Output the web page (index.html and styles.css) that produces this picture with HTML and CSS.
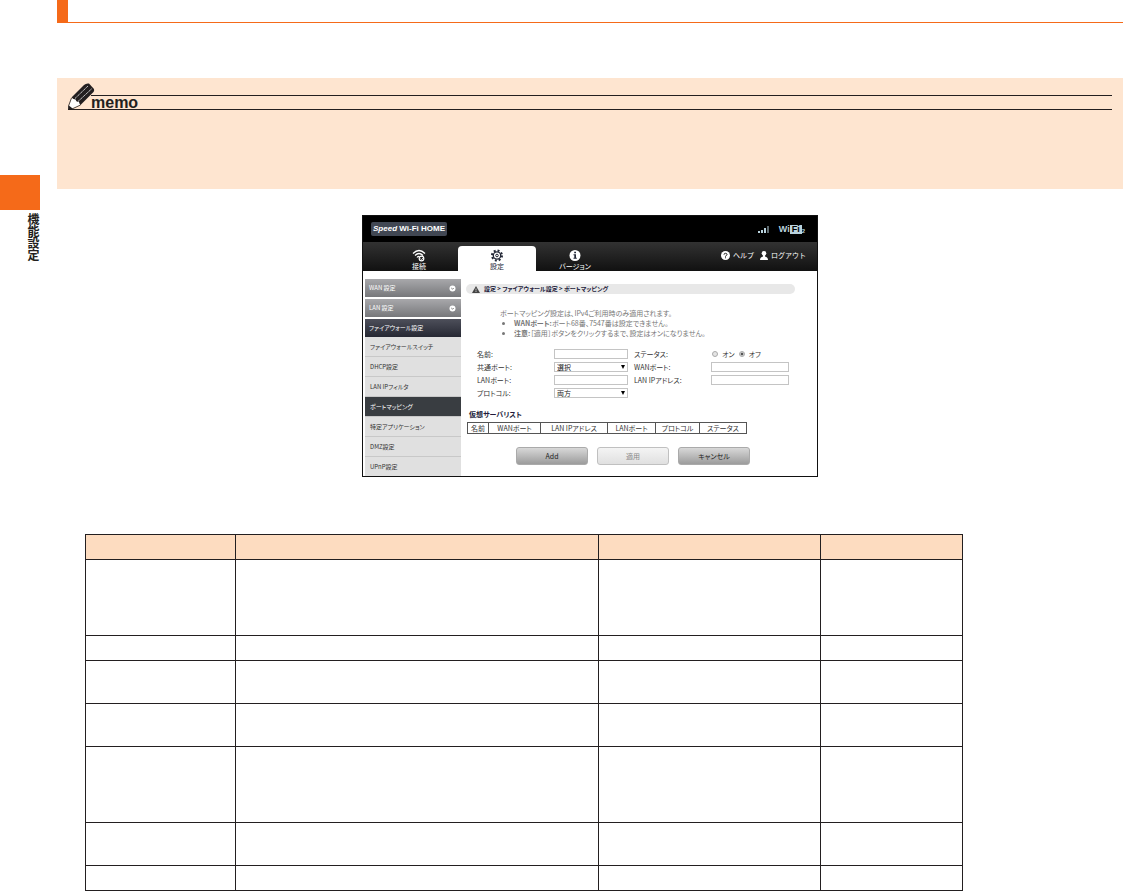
FILE: index.html
```html
<!DOCTYPE html>
<html lang="ja">
<head>
    <meta charset="UTF-8">
    <meta name="viewport" content="width=device-width, initial-scale=1.0">
    <title>機能設定 - ポートマッピング</title>
    <link rel="stylesheet" href="styles.css">
</head>
<body>
    <aside class="chapter">
        <div class="chapter-tab"></div>
        <div class="chapter-name">機能設定</div>
    </aside>

    <main class="page">
        <div class="page-title"></div>

        <section class="memo">
            <div class="memo-head">
                <svg class="pencil" viewBox="0 0 27 27">
                    <path d="M3.500 14.500 L16 2 Q18 0 21 0.500 L26 6 Q26.500 8 25.500 9 L12.500 22 Z" fill="#231f20"/>
                    <path d="M7 15.500 L20 3 M10 18.500 L24 5.500" stroke="#fff" stroke-width="0.8" stroke-dasharray="1.600 0.500"/>
                    <path d="M3.500 15.500 L7.500 16.500 L8.500 18.500 L11 19 L12 22 L3.500 25.500 L1 23.500 Z" fill="#fff"/>
                    <path d="M3.500 15 L0.500 23 L0.500 26 L4 26 L12.500 22" fill="none" stroke="#231f20" stroke-width="0.8"/>
                    <path d="M0.800 22.500 L0.500 26.500 L5 25.700 Z" fill="#231f20"/>
                </svg>
                <h2>memo</h2>
            </div>
        </section>

        <!-- Router settings screen -->
        <div class="screen">
            <div class="brand-bar">
                <span class="brand"><em>Speed</em> Wi-Fi HOME</span>
                <div class="signals">
                    <svg width="12" height="8" viewBox="0 0 12 8" fill="#b9d3de">
                        <path d="M0 6h2v2H0zM3 5h2v3H3zM6 3h2v5H6z"/>
                        <path d="M9.500 1h1v7h-1z"/>
                    </svg>
                    <span class="wifi-logo">Wi<b>Fi</b><small>2</small></span>
                </div>
            </div>

            <nav class="tabs">
                <a href="#">
                    <svg width="14" height="13" viewBox="0 0 14 13" fill="none" stroke="#fff" stroke-width="1.2">
                        <path d="M1 4.500Q7 -1.500 13 4.500M3 6.500Q7 2.500 11 6.500M5 8.500Q6 7.200 7.500 7.500"/>
                        <circle cx="9.500" cy="9.500" r="2.300"/>
                        <path d="M8.500 9.500l1 1 2-2" stroke-width="0.8"/>
                    </svg>
                    接続
                </a>
                <a href="#" class="active">
                    <svg width="14" height="13" viewBox="0 0 14 13" fill="none" stroke="#222736">
                        <circle cx="7" cy="6.500" r="5" stroke-width="2" stroke-dasharray="1.960 1.960"/>
                        <circle cx="7" cy="6.500" r="3.700" stroke-width="1.300"/>
                        <circle cx="7" cy="6.500" r="1.300"/>
                    </svg>
                    設定
                </a>
                <a href="#">
                    <svg width="14" height="13" viewBox="0 0 14 13">
                        <circle cx="7" cy="6.500" r="5.500" fill="#fff"/>
                        <path d="M6.200 2.800h1.800v1.500H6.200zM5.500 5.300h2.500v3.500h.8v1H5.500v-1h.8V6.300h-.8z" fill="#222736"/>
                    </svg>
                    バージョン
                </a>
                <div class="account">
                    <a href="#">
                        <svg width="9" height="9" viewBox="0 0 9 9">
                            <circle cx="4.500" cy="4.500" r="4.500" fill="#fff"/>
                            <path d="M3 3.700Q3 2.300 4.500 2.300T6 3.600Q6 4.300 4.500 5V5.600M4.500 6.300v1" fill="none" stroke="#222"/>
                        </svg>
                        ヘルプ
                    </a>
                    <a href="#">
                        <svg width="8" height="9" viewBox="0 0 8 9" fill="#fff">
                            <circle cx="4" cy="2.300" r="2.300"/>
                            <path d="M3 4h2v1.500Q8 6 8 9H0Q0 6 3 5.500z"/>
                        </svg>
                        ログアウト
                    </a>
                </div>
            </nav>

            <div class="screen-body">
                <nav class="menu">
                    <a href="#" class="group">WAN 設定
                        <svg width="7" height="7" viewBox="0 0 7 7"><circle cx="3.500" cy="3.500" r="3" fill="#fff"/><path d="M2.300 3l1.200 1.200L4.700 3" fill="none" stroke="#777"/></svg>
                    </a>
                    <a href="#" class="group">LAN 設定
                        <svg width="7" height="7" viewBox="0 0 7 7"><circle cx="3.500" cy="3.500" r="3" fill="#fff"/><path d="M2.300 3l1.200 1.200L4.700 3" fill="none" stroke="#777"/></svg>
                    </a>
                    <a href="#" class="group open">ファイアウォール設定</a>
                    <a href="#">ファイアウォールスイッチ</a>
                    <a href="#">DHCP設定</a>
                    <a href="#">LAN IPフィルタ</a>
                    <a href="#" class="current">ポートマッピング</a>
                    <a href="#">特定アプリケーション</a>
                    <a href="#">DMZ設定</a>
                    <a href="#">UPnP設定</a>
                </nav>

                <form class="content">
                    <div class="breadcrumb">
                        <svg width="8" height="7" viewBox="0 0 8 7"><path d="M4 0l4 7H0z" fill="#444"/><path d="M4 2.500v2M4 5v1" stroke="#ddd" stroke-width="0.8"/></svg>
                        設定 &gt; ファイアウォール設定 &gt; ポートマッピング
                    </div>

                    <div class="notes">
                        <p>ポートマッピング設定は、IPv4ご利用時のみ適用されます。</p>
                        <ul>
                            <li><b>WANポート:</b>ポート68番、7547番は設定できません。</li>
                            <li><b>注意:</b>［適用］ボタンをクリックするまで、設定はオンになりません。</li>
                        </ul>
                    </div>

                    <div class="fields">
                        <label for="name">名前:</label>
                        <input type="text" id="name">
                        <span>ステータス:</span>
                        <div class="radios">
                            <input type="radio" name="status" id="on"><label for="on">オン</label>
                            <input type="radio" name="status" id="off" checked><label for="off">オフ</label>
                        </div>
                        <label for="common">共通ポート:</label>
                        <select id="common"><option>選択</option></select>
                        <label for="wanPort">WANポート:</label>
                        <input type="text" id="wanPort">
                        <label for="lanPort">LANポート:</label>
                        <input type="text" id="lanPort">
                        <label for="lanIp">LAN IPアドレス:</label>
                        <input type="text" id="lanIp">
                        <label for="protocol">プロトコル:</label>
                        <select id="protocol"><option>両方</option></select>
                    </div>

                    <h3>仮想サーバリスト</h3>
                    <table class="servers">
                        <colgroup>
                            <col class="s-name"><col class="s-wan"><col class="s-ip"><col class="s-lan"><col class="s-proto"><col class="s-status">
                        </colgroup>
                        <tr><th>名前</th><th>WANポート</th><th>LAN IPアドレス</th><th>LANポート</th><th>プロトコル</th><th>ステータス</th></tr>
                    </table>

                    <div class="buttons">
                        <button type="button">Add</button>
                        <button type="button" disabled>適用</button>
                        <button type="button">キャンセル</button>
                    </div>
                </form>
            </div>
        </div>

        <table class="items">
            <colgroup>
                <col class="c-item"><col class="c-desc"><col class="c-range"><col class="c-default">
            </colgroup>
            <thead>
                <tr><th></th><th></th><th></th><th></th></tr>
            </thead>
            <tbody>
                <tr class="tall"><td></td><td></td><td></td><td></td></tr>
                <tr><td></td><td></td><td></td><td></td></tr>
                <tr class="medium"><td></td><td></td><td></td><td></td></tr>
                <tr class="medium"><td></td><td></td><td></td><td></td></tr>
                <tr class="tall"><td></td><td></td><td></td><td></td></tr>
                <tr class="medium"><td></td><td></td><td></td><td></td></tr>
                <tr><td></td><td></td><td></td><td></td></tr>
            </tbody>
        </table>
    </main>
</body>
</html>
```
FILE: styles.css
```css
* {
    box-sizing: border-box;
}
body {
    margin: 0;
    display: flex;
    gap: 17px;
    background-color: #fff;
    color: #231f20;
    font-family: "Liberation Sans", "Noto Sans CJK JP", sans-serif;
}
a {
    color: inherit;
    text-decoration: none;
}

/* Chapter index on the left edge */
.chapter {
    width: 40px;
    padding-top: 175px;
    flex-shrink: 0;
}
.chapter-tab {
    height: 35px;
    background-color: #f56a19;
}
.chapter-name {
    margin: 3px 0 0 auto;
    width: 14px;
    writing-mode: vertical-rl;
    font-family: "Noto Sans CJK JP", sans-serif;
    font-size: 12px;
    line-height: 14px;
    font-weight: bold;
}

.page {
    flex: 1;
    min-width: 0;
}
.page-title {
    height: 23px;
    border-left: 11px solid #f56a19;
    border-bottom: 1px solid #f56a19;
}

.memo {
    margin-top: 55px;
    min-height: 111px;
    padding: 5px 11px;
    background-color: #fee5d0;
}
.memo-head {
    display: flex;
    align-items: flex-end;
    border-bottom: 1px solid #231f20;
}
.pencil {
    width: 27px;
    height: 27px;
    margin: 0 -4px -1px 0;
}
.memo h2 {
    flex: 1;
    margin: 0;
    border-top: 1px solid #231f20;
    font-size: 16px;
    line-height: 13px;
}

/* Router screen */
.screen {
    max-width: 456px;
    margin: 26px auto 0;
    border: 1px solid #111;
    font-family: "Noto Sans CJK JP", sans-serif;
    font-feature-settings: "palt";
    font-size: 7px;
    line-height: 10px;
}
.brand-bar {
    display: flex;
    justify-content: space-between;
    align-items: center;
    height: 26px;
    padding: 0 12px 0 8px;
    background-color: #000;
    color: #fff;
}
.brand {
    width: 76px;
    border-radius: 2px;
    background-color: #414753;
    font: bold 8px/14px "Liberation Sans", sans-serif;
    text-align: center;
}
.signals {
    display: flex;
    align-items: center;
    gap: 9px;
}
.wifi-logo {
    display: flex;
    align-items: flex-end;
    color: #b9d3de;
    font: bold 9px/9px "Liberation Sans", sans-serif;
}
.wifi-logo b {
    padding: 0 2px;
    background-color: #b9d3de;
    color: #000;
}
.wifi-logo small {
    font-size: 6px;
    line-height: 6px;
}

.tabs {
    display: flex;
    align-items: flex-end;
    height: 29px;
    padding-left: 17px;
    background: linear-gradient(#323232, #111);
    color: #fff;
}
.tabs > a {
    display: flex;
    flex-direction: column;
    align-items: center;
    width: 78px;
    height: 25px;
    padding-top: 3px;
    line-height: 9px;
}
.tabs .active {
    border-radius: 4px 4px 0 0;
    background-color: #fff;
    color: #222736;
}
.account {
    display: flex;
    gap: 6px;
    margin-left: auto;
    align-self: center;
    padding: 0 11px 3px 0;
    font-feature-settings: normal;
}
.account a {
    display: flex;
    align-items: center;
    gap: 3px;
}

.screen-body {
    display: flex;
    gap: 5px;
}
.menu {
    width: 98px;
    padding: 8px 0 0 2px;
    flex-shrink: 0;
}
.menu a {
    display: flex;
    justify-content: space-between;
    align-items: center;
    height: 20px;
    padding: 0 5px;
    border-bottom: 1px solid #c8c8c8;
    background-color: #e0e0e0;
    color: #333;
    font-size: 6px;
}
.menu a:last-child {
    height: 19px;
    border-bottom: 0;
}
.menu .group {
    height: 18px;
    margin-bottom: 2px;
    padding: 0 5px 0 4px;
    border: 0;
    background: linear-gradient(#a8a8ab, #77787b);
    color: #fff;
}
.menu .open {
    margin-bottom: 0;
    background: linear-gradient(#4d4f5a, #262833);
}
.menu .current {
    background-color: #393d41;
    color: #fff;
}

.content {
    flex: 1;
    padding: 13px 22px 0 0;
}
.breadcrumb {
    display: flex;
    align-items: center;
    gap: 4px;
    padding-left: 6px;
    border-radius: 5px;
    background-color: #e8e8e8;
    color: #221a3a;
    font-size: 6px;
    font-weight: bold;
}
.notes {
    margin: 14px 0 0 34px;
    color: #777;
}
.notes p,
.notes ul {
    margin: 0;
}
.notes ul {
    padding-left: 14px;
}
.fields {
    display: grid;
    grid-template-columns: 77px 74px 83px 78px;
    grid-auto-rows: 10px;
    row-gap: 3px;
    margin: 11px 0 0 11px;
    color: #333;
}
.fields > :nth-child(4n + 3) {
    padding-left: 6px;
}
.fields input[type="text"],
.fields select {
    width: 100%;
    height: 10px;
    margin: 0;
    padding: 0 2px;
    border: 1px solid #c4c4c4;
    border-radius: 0;
    background-color: #fff;
    color: #222;
    font: inherit;
    line-height: 8px;
}
.fields select {
    appearance: none;
    background-image: url("data:image/svg+xml,%3Csvg xmlns='http://www.w3.org/2000/svg' width='4' height='4'%3E%3Cpath d='M0 0h4L2 4z'/%3E%3C/svg%3E");
    background-repeat: no-repeat;
    background-position: right 2px center;
}
.radios {
    display: flex;
    align-items: center;
    gap: 4px;
    padding-left: 1px;
}
.radios input {
    appearance: none;
    width: 6px;
    height: 6px;
    margin: 0;
    border: 1px solid #aaa;
    border-radius: 50%;
    background-color: #e4e4e4;
}
.radios input:checked {
    background: radial-gradient(#555 40%, #ddd 60%);
}

.content h3 {
    margin: 11px 0 3px 3px;
    color: #221a3a;
    font-size: 7px;
}
.servers {
    margin-left: 1px;
    width: 280px;
    table-layout: fixed;
    border-collapse: collapse;
}
.servers th {
    height: 11px;
    padding: 0;
    border: 1px solid #555;
    color: #333;
    font-weight: normal;
    line-height: 9px;
}
.s-name { width: 21px; }
.s-wan { width: 52px; }
.s-ip { width: 67px; }
.s-lan { width: 48px; }
.s-proto { width: 44px; }

.buttons {
    display: flex;
    gap: 9px;
    margin: 13px 0 8px 50px;
}
.buttons button {
    width: 72px;
    height: 18px;
    padding: 0;
    border: 1px solid #aaa;
    border-radius: 3px;
    background: linear-gradient(#d8d8d8, #9c9c9c);
    color: #222;
    font: inherit;
}
.buttons button:disabled {
    border-color: #c0c0c0;
    background: linear-gradient(#f4f4f4, #e0e0e0);
    color: #888;
}

/* Settings item table */
.items {
    width: calc(100% - 56px);
    max-width: 878px;
    margin: 57px 0 0 28px;
    table-layout: fixed;
    border-collapse: collapse;
}
.items th,
.items td {
    padding: 0;
    border: 1px solid #231f20;
}
.items th {
    background-color: #fddcc0;
}
.items tr {
    height: 25px;
}
.items .medium {
    height: 43px;
}
.items .tall {
    height: 76px;
}
.c-item { width: 150px; }
.c-desc { width: 363px; }
.c-range { width: 222px; }
```
